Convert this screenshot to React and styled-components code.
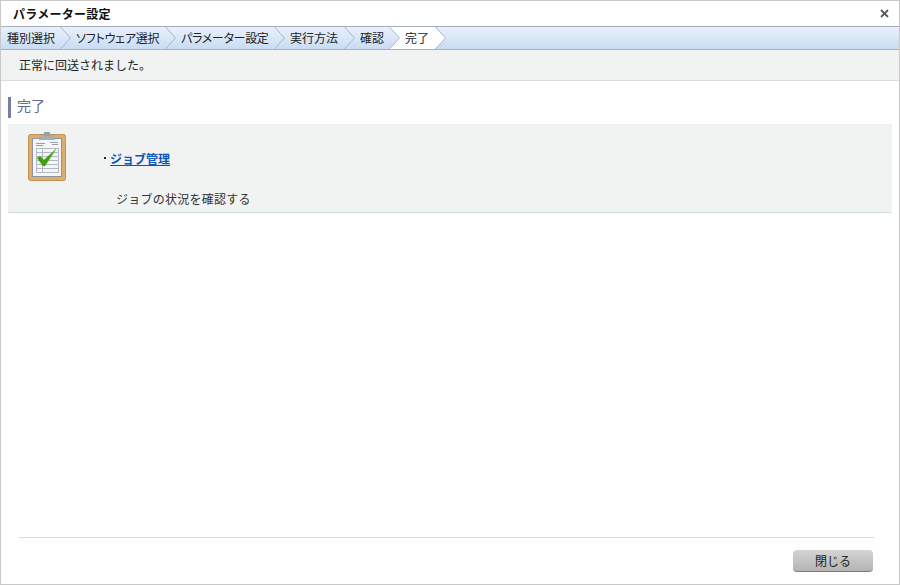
import React from "react";
import styled, { createGlobalStyle } from "styled-components";

const steps = [
  { label: "種別選択", width: 64 },
  { label: "ソフトウェア選択", width: 100, tracking: -0.2 },
  { label: "パラメーター設定", width: 104, tracking: -0.3 },
  { label: "実行方法", width: 65 },
];

const App = () => {
  return (
    <>
      <GlobalStyle />
      <StWindow>
        <StTitleBar>
          <StTitle>パラメーター設定</StTitle>
          <StClose viewBox="0 0 9 9">
            <path d="M1 1l7 7M8 1L1 8" stroke="#565c5c" strokeWidth="1.8" />
          </StClose>
        </StTitleBar>
        <StCrumbs>
          {steps.map((step) => (
            <StStep key={step.label} $width={step.width}>
              <StStepLabel $tracking={step.tracking}>{step.label}</StStepLabel>
              <Chevron />
            </StStep>
          ))}
          <StStep $width={24}>
            <StStepLabel>確認</StStepLabel>
          </StStep>
          <StActiveStep>
            <ChevronNotch />
            <StActiveLabel>完了</StActiveLabel>
            <ChevronTip />
          </StActiveStep>
        </StCrumbs>
        <StMessage>正常に回送されました。</StMessage>
        <StHeading>完了</StHeading>
        <StPanel>
          <ClipboardIcon />
          <StPanelBody>
            <StLinkRow>
              <StDot />
              <StLink href="#">ジョブ管理</StLink>
            </StLinkRow>
            <StDescription>ジョブの状況を確認する</StDescription>
          </StPanelBody>
        </StPanel>
        <StFooter>
          <StCloseButton type="button">閉じる</StCloseButton>
        </StFooter>
      </StWindow>
    </>
  );
};

export default App;

const Chevron = () => (
  <StChevron viewBox="0 0 11 22">
    <path d="M0.5 0L10.5 11L0.5 22" fill="none" stroke="#a9b5c8" />
  </StChevron>
);

const ChevronNotch = () => (
  <StChevron viewBox="0 0 11 22">
    <path d="M0 0H11V22H0L10 11Z" fill="#fff" />
    <path d="M0.5 0L10.5 11L0.5 22" fill="none" stroke="#a9b5c8" />
  </StChevron>
);

const ChevronTip = () => (
  <StChevron viewBox="0 0 11 22">
    <path d="M0 0L10.5 11L0 22Z" fill="#fff" />
    <path d="M0.5 0L10.5 11L0.5 22" fill="none" stroke="#a9b5c8" />
  </StChevron>
);

const ClipboardIcon = () => (
  <StIcon viewBox="0 0 38 49">
    <rect x="0.5" y="2.5" width="37" height="46" rx="2" fill="#dcae6c" stroke="#c4934f" />
    <rect x="4.5" y="6.5" width="29" height="38" fill="#f4f5f8" stroke="#8d93a0" />
    <rect x="11" y="3" width="16" height="5" fill="#a9adaf" />
    <rect x="16" y="0" width="6" height="4" fill="#9a9e9f" />
    <path d="M8 11.5h9M8 13.5h7M22 10.5h8M24 12.5h6" stroke="#9a9ea6" />
    <path
      d="M8 16.5h23M8 20.5h23M8 24.5h23M8 28.5h23M8 32.5h23M8 36.5h23M8 40.5h23M8.5 16v25M14.5 16v25M30.5 16v25"
      stroke="#b4b8c0"
      fill="none"
    />
    <path d="M9 26l3-2 4 4 12-11-11 17h-2z" fill="#3f9e12" stroke="#62bb30" strokeWidth="0.5" />
  </StIcon>
);

const GlobalStyle = createGlobalStyle`
  html, body {
    margin: 0;
    padding: 0;
    background: #fff;
  }

  body {
    font-family: "Noto Sans CJK JP", "Liberation Sans", sans-serif;
    font-size: 12px;
    color: #222;
  }
`;

const StWindow = styled.div`
  box-sizing: border-box;
  display: flex;
  flex-direction: column;
  width: 900px;
  height: 585px;
  border: 1px solid #c8c8c8;
  background: #fff;
`;

const StTitleBar = styled.div`
  display: flex;
  align-items: center;
  justify-content: space-between;
  box-sizing: border-box;
  height: 26px;
  padding: 0 10px 0 12px;
  border-bottom: 1px solid #a4afbf;
`;

const StTitle = styled.h1`
  margin: 0;
  font-size: 12px;
  font-weight: 700;
  letter-spacing: 0.25px;
  color: #111;
`;

const StClose = styled.svg`
  width: 9px;
  height: 9px;
`;

const StCrumbs = styled.div`
  display: flex;
  box-sizing: border-box;
  height: 23px;
  padding-left: 6px;
  background: linear-gradient(#e9f1fa, #c9dcf4);
  border-bottom: 1px solid #a8b0bc;
`;

const StStep = styled.div`
  display: flex;
  align-items: center;
  justify-content: space-between;
  width: ${(props) => props.$width}px;
  margin-right: 5px;
`;

const StStepLabel = styled.span`
  font-feature-settings: "palt";
  letter-spacing: ${(props) => props.$tracking || 0}px;
  line-height: 22px;
  white-space: nowrap;
  color: #222;
`;

const StChevron = styled.svg`
  flex: none;
  width: 11px;
  height: 22px;
`;

const StActiveStep = styled.div`
  display: flex;
`;

const StActiveLabel = styled.span`
  box-sizing: border-box;
  width: 35px;
  padding-left: 5px;
  line-height: 22px;
  background: #fff;
  white-space: nowrap;
  color: #222;
`;

const StMessage = styled.div`
  box-sizing: border-box;
  height: 31px;
  padding-left: 18px;
  line-height: 30px;
  background: #f1f2f2;
  border-bottom: 1px solid #d6dde2;
  color: #222;
`;

const StHeading = styled.h2`
  height: 21px;
  margin: 16px 0 6px 7px;
  padding-left: 6px;
  border-left: 3px solid #747ea4;
  font-size: 14px;
  font-weight: 400;
  line-height: 17px;
  color: #5f6a92;
`;

const StPanel = styled.div`
  display: flex;
  box-sizing: border-box;
  height: 89px;
  margin: 0 7px;
  padding: 8px 0 0 20px;
  background: #f1f2f2;
  border-bottom: 1px solid #d2dfe2;
`;

const StIcon = styled.svg`
  flex: none;
  width: 38px;
  height: 49px;
`;

const StPanelBody = styled.div`
  display: flex;
  flex-direction: column;
  margin-left: 38px;
`;

const StLinkRow = styled.div`
  display: flex;
  align-items: center;
  gap: 4px;
  height: 18px;
  margin-top: 17px;
`;

const StDot = styled.span`
  width: 2px;
  height: 2px;
  background: #222;
`;

const StLink = styled.a`
  font-weight: 700;
  color: #0a55b8;
  text-decoration: underline;
`;

const StDescription = styled.div`
  margin-top: 23px;
  padding-left: 12px;
  line-height: 18px;
  letter-spacing: 0.25px;
  color: #333;
`;

const StFooter = styled.div`
  display: flex;
  justify-content: flex-end;
  box-sizing: border-box;
  height: 47px;
  margin: auto 25px 0 18px;
  padding: 12px 1px 0 0;
  border-top: 1px solid #d4d8d8;
`;

const StCloseButton = styled.button`
  width: 80px;
  height: 22px;
  padding: 0;
  border: 0;
  border-bottom: 1px solid #7d7d7d;
  border-radius: 4px;
  background: linear-gradient(#d4d4d4, #b4b4b4);
  font: inherit;
  color: #222;
`;
